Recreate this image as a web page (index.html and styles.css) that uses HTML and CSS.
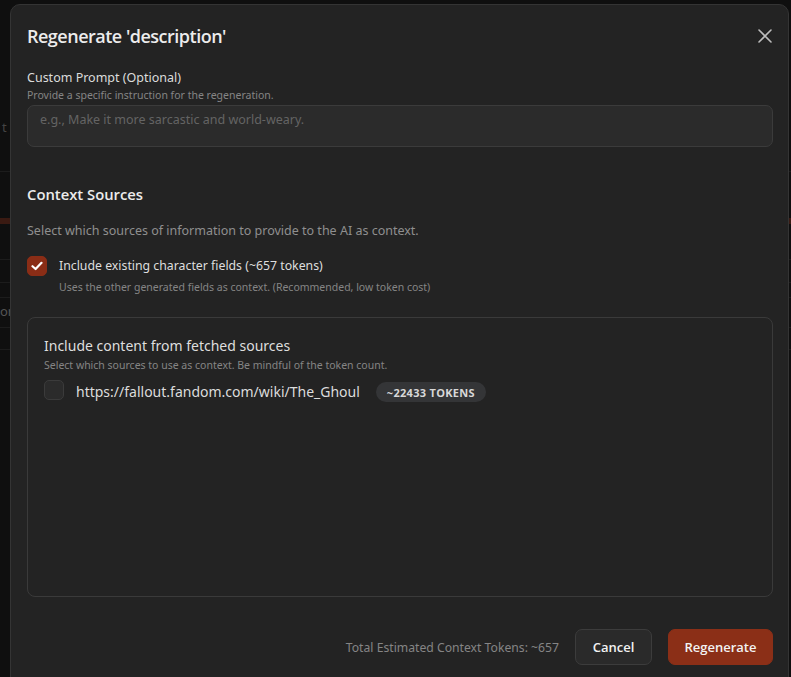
FILE: index.html
```html
<!DOCTYPE html>
<html lang="en">
<head>
<meta charset="utf-8">
<title>Regenerate 'description'</title>
<link rel="stylesheet" href="styles.css">
</head>
<body>
<div class="page">
  <div class="page-row r1"><span class="ghost">t</span></div>
  <div class="page-row r2"></div>
  <div class="page-row r3"></div>
  <div class="page-row r4"></div>
  <div class="page-row r5"></div>
  <div class="page-row r6"><span class="ghost">or</span></div>
  <div class="page-row r7"></div>
</div>

<div class="modal">
  <div class="modal-header">
    <h2 class="modal-title">Regenerate 'description'</h2>
    <button class="close-btn" aria-label="Close">
      <svg width="14" height="14" viewBox="0 0 14 14"><path d="M1 1 L13 13 M13 1 L1 13" stroke="#bdbdbd" stroke-width="1.6" stroke-linecap="round"/></svg>
    </button>
  </div>

  <div class="field">
    <label class="field-label">Custom Prompt (Optional)</label>
    <div class="field-desc">Provide a specific instruction for the regeneration.</div>
    <div class="input"><span class="placeholder">e.g., Make it more sarcastic and world-weary.</span></div>
  </div>

  <h3 class="section-title">Context Sources</h3>
  <p class="section-desc">Select which sources of information to provide to the AI as context.</p>

  <div class="check-row">
    <span class="checkbox checked">
      <svg width="12" height="10" viewBox="0 0 12 10"><path d="M1.5 5.2 L4.6 8 L10.5 1.8" fill="none" stroke="#fff" stroke-width="2.2" stroke-linecap="round" stroke-linejoin="round"/></svg>
    </span>
    <span class="check-label">Include existing character fields (~657 tokens)</span>
  </div>
  <div class="check-sub">Uses the other generated fields as context. (Recommended, low token cost)</div>

  <div class="sources-box">
    <div class="sources-title">Include content from fetched sources</div>
    <div class="sources-desc">Select which sources to use as context. Be mindful of the token count.</div>
    <div class="source-row">
      <span class="checkbox"></span>
      <span class="source-url">https://fallout.fandom.com/wiki/The_Ghoul</span>
      <span class="badge">~22433 TOKENS</span>
    </div>
  </div>

  <div class="footer">
    <span class="total">Total Estimated Context Tokens: ~657</span>
    <button class="btn btn-cancel">Cancel</button>
    <button class="btn btn-primary">Regenerate</button>
  </div>
</div>
</body>
</html>
```

FILE: styles.css
```css
* { box-sizing: border-box; }
html, body { margin: 0; padding: 0; }
body {
  width: 791px;
  height: 677px;
  overflow: hidden;
  background: #0f0f0f;
  font-family: "Noto Sans", "Open Sans", sans-serif;
  position: relative;
}

.page { padding-top: 100px; }
.page-row { border-bottom: 1px solid #1c1c1c; position: relative; }
.r1 { height: 72px; }
.r2 { height: 52px; border-bottom: 6px solid #3a1a12; }
.r3 { height: 36px; }
.r4 { height: 23px; }
.r5 { height: 15px; }
.r6 { height: 30px; }
.r7 { height: 22px; }
.ghost { position: absolute; left: 2px; top: 18px; color: #444; font-size: 13px; }
.r6 .ghost { left: 0; top: 4px; color: #555; }

.modal {
  position: absolute;
  left: 10px;
  top: 4px;
  width: 779px;
  height: 700px;
  background: #232323;
  border: 1px solid #343434;
  border-radius: 10px;
  padding: 17px 15px 0 16px;
  color: #e6e6e6;
}

.modal-header {
  display: flex;
  justify-content: space-between;
  align-items: center;
  height: 28px;
}
.modal-title {
  margin: 0;
  font-family: "Open Sans", "Noto Sans", sans-serif;
  font-size: 18px;
  font-weight: 600;
  letter-spacing: -0.5px;
  line-height: 28px;
  color: #ececec;
}
.close-btn {
  background: none;
  border: 0;
  padding: 0;
  margin-right: 1px;
  width: 14px;
  height: 14px;
  display: flex;
}

.field { margin-top: 19px; }
.field-label {
  display: block;
  font-size: 12.5px;
  line-height: 18px;
  color: #dcdcdc;
}
.field-desc {
  font-size: 10.5px;
  line-height: 14px;
  color: #858585;
  margin-top: 1px;
}
.input {
  margin-top: 3px;
  height: 42px;
  background: #2b2b2b;
  border: 1px solid #3b3b3b;
  border-radius: 7px;
  padding: 1px 12px;
}
.placeholder {
  font-size: 12.5px;
  line-height: 18px;
  color: #646464;
}

.section-title {
  margin: 37px 0 0;
  font-family: "Open Sans", "Noto Sans", sans-serif;
  font-size: 14.8px;
  font-weight: 600;
  line-height: 20px;
  color: #ececec;
}
.section-desc {
  margin: 18px 0 0;
  font-size: 12.5px;
  line-height: 18px;
  color: #8f8f8f;
}

.check-row {
  margin-top: 16px;
  display: flex;
  align-items: center;
  gap: 12px;
}
.checkbox {
  width: 20px;
  height: 20px;
  border-radius: 5px;
  background: #2b2b2b;
  border: 1px solid #3b3b3b;
  display: flex;
  align-items: center;
  justify-content: center;
  flex: none;
}
.checkbox.checked { background: #8a2d16; border-color: #8a2d16; }
.check-label {
  font-size: 12.3px;
  line-height: 18px;
  color: #dedede;
}
.check-sub {
  margin: 4px 0 0 32px;
  font-size: 10.5px;
  line-height: 14px;
  color: #858585;
}

.sources-box {
  margin-top: 23px;
  height: 280px;
  border: 1px solid #3a3a3a;
  border-radius: 8px;
  padding: 18px 16px;
}
.sources-title {
  font-size: 14px;
  line-height: 20px;
  color: #dedede;
}
.sources-desc {
  margin-top: 2px;
  font-size: 10.5px;
  line-height: 14px;
  color: #858585;
}
.source-row {
  margin-top: 8px;
  display: flex;
  align-items: center;
  gap: 12px;
}
.source-url {
  font-size: 14px;
  line-height: 20px;
  color: #dcdcdc;
  margin-right: 4px;
  position: relative;
  top: 2px;
}
.badge {
  height: 20px;
  padding: 0 11px;
  border-radius: 10px;
  background: #343537;
  color: #d8d8d8;
  font-family: "Open Sans", "Noto Sans", sans-serif;
  font-size: 11px;
  font-weight: 700;
  letter-spacing: 0.3px;
  display: flex;
  align-items: center;
  position: relative;
  top: 2px;
}

.footer {
  margin-top: 32px;
  display: flex;
  justify-content: flex-end;
  align-items: center;
  gap: 16px;
}
.total {
  font-size: 12.2px;
  color: #858585;
}
.btn {
  height: 36px;
  border-radius: 7px;
  font-family: "Open Sans", "Noto Sans", sans-serif;
  font-size: 13px;
  font-weight: 600;
  color: #f2f2f2;
  cursor: pointer;
}
.btn-cancel {
  width: 77px;
  background: #2a2a2a;
  border: 1px solid #3c3c3c;
}
.btn-primary {
  width: 105px;
  background: #8b2f17;
  border: 1px solid #8b2f17;
}
```
